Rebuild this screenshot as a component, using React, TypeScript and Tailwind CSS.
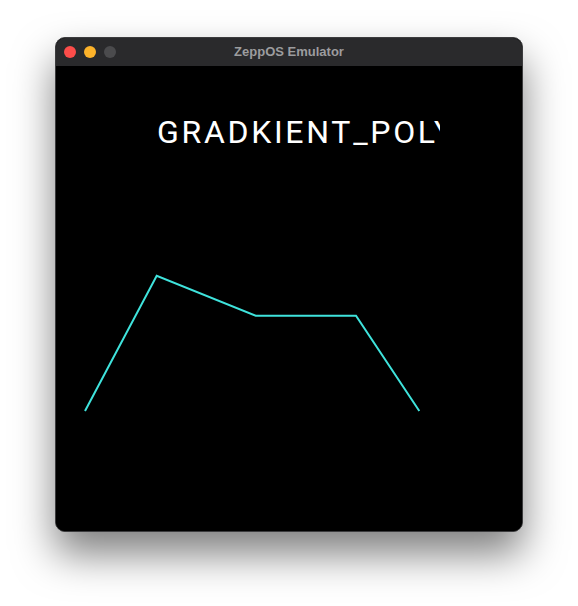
import React from 'react';

const points = [
    [29, 345],
    [100.7, 209.7],
    [199.7, 249.7],
    [300, 249.7],
    [363.3, 345],
];

const App: React.FC = () => {
    return (
        <div className="w-[578px] h-[606px] bg-white pt-[37px] pl-[55px] overflow-hidden">
            <div className="w-[468px] h-[495px] rounded-[10px] border border-[#3c3c3e] bg-black overflow-hidden shadow-[0_22px_40px_rgba(0,0,0,0.5)] flex flex-col">
                {/* title bar */}
                <div className="h-[28px] shrink-0 bg-[#2a2a2c] relative flex items-center pl-[8px] gap-[8px]">
                    <span className="w-[12px] h-[12px] rounded-full bg-[#fd4d4a]" />
                    <span className="w-[12px] h-[12px] rounded-full bg-[#fdb32a]" />
                    <span className="w-[12px] h-[12px] rounded-full bg-[#4b4b4d]" />
                    <div className="absolute inset-0 flex items-center justify-center text-[13px] font-bold text-[#9c9c9e] font-['Helvetica','Liberation_Sans',sans-serif]">
                        ZeppOS Emulator
                    </div>
                </div>
                {/* watch screen */}
                <div className="relative w-[466px] h-[466px] bg-black">
                    <div className="absolute left-[101px] top-[50px] w-[283px] overflow-hidden whitespace-nowrap text-white text-[32px] leading-none tracking-[2.7px] font-['Roboto',sans-serif]">
                        GRADKIENT_POLYLINE
                    </div>
                    <svg className="absolute left-0 top-0" width="466" height="466">
                        <polyline
                            points={points.map((p) => p.join(',')).join(' ')}
                            fill="none"
                            stroke="#3fe3dc"
                            strokeWidth="2"
                        />
                    </svg>
                </div>
            </div>
        </div>
    );
};

export default App;
